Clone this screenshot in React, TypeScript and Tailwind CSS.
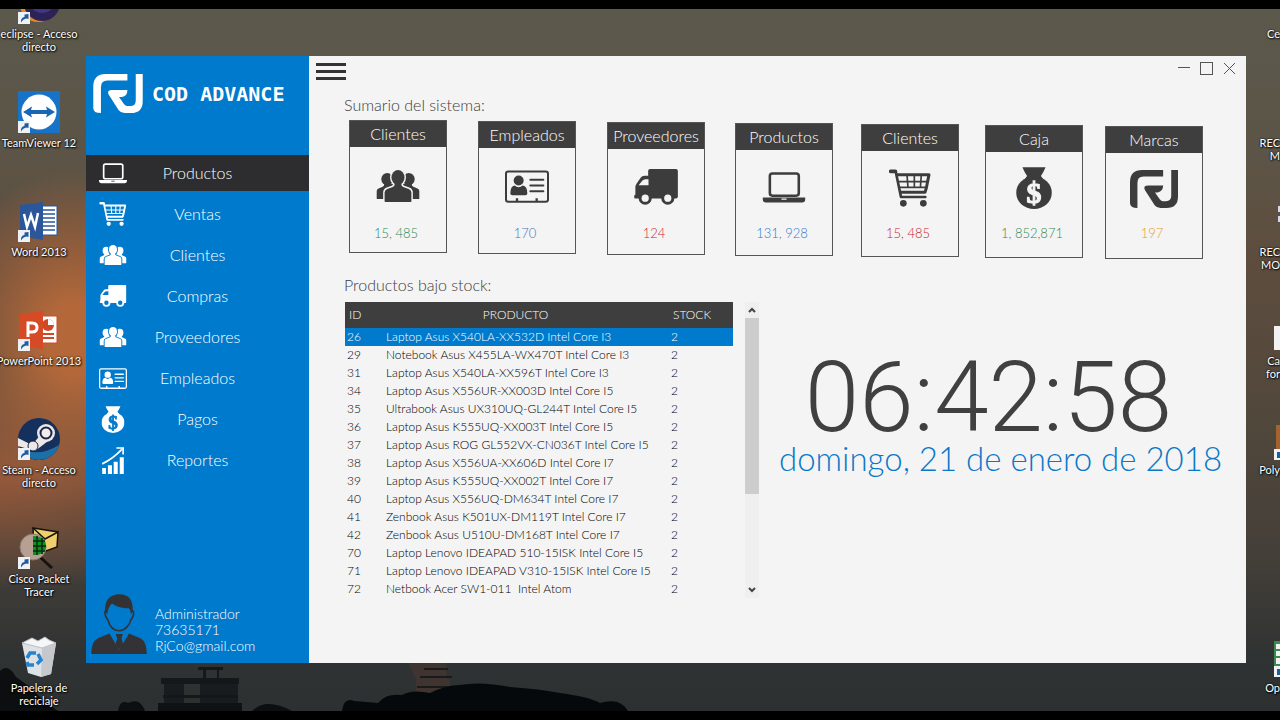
import { useId, type ReactNode } from 'react';

type IconProps = { className?: string };

function LogoIcon({ className }: IconProps) {
  return (
    <svg viewBox="0 0 142 112" className={className} fill="currentColor" aria-hidden="true">
      <path d="M0 98V36Q0 0 36 0H98V19H40Q22 19 22 38V112Q0 112 0 98Z" />
      <path d="M98 46H54Q38 46 44 59L73 104Q79 112 90 112H108Q142 112 142 78V0H122V76Q122 92 106 92H98Q92 92 88 86L74 66H82Q98 64 98 46Z" />
    </svg>
  );
}

function LaptopIcon({ className }: IconProps) {
  return (
    <svg viewBox="0 0 132 112" className={className} fill="currentColor" aria-hidden="true">
      <rect x="22" y="14" width="90" height="69" rx="8" fill="none" stroke="currentColor" strokeWidth="8" />
      <path fillRule="evenodd" d="M0 89H132V94Q132 104 122 104H10Q0 104 0 94ZM58 92V96H74V92Z" />
    </svg>
  );
}

function CartIcon({ className }: IconProps) {
  return (
    <svg viewBox="0 0 126 112" className={className} fill="none" stroke="currentColor" aria-hidden="true">
      <path d="M5 6H19" strokeWidth="11" strokeLinecap="round" />
      <path d="M20 6L36 83H109" strokeWidth="8" strokeLinecap="round" strokeLinejoin="round" />
      <path d="M24 16H120L112 56L108 69H34" strokeWidth="9" strokeLinejoin="round" />
      <path d="M28 37H116M32 54H112M54 16L57 56M76 16V56M97 16L94 56" strokeWidth="5" />
      <circle cx="43" cy="102" r="10" fill="currentColor" stroke="none" />
      <circle cx="103" cy="102" r="10" fill="currentColor" stroke="none" />
    </svg>
  );
}

function UsersIcon({ className }: IconProps) {
  const id = useId();
  const body = 'M25 96V69Q25 61 33 58L50 52Q56 50 56 42H76Q76 50 82 52L99 58Q107 61 107 69V96Q107 98 105 98H27Q25 98 25 96Z';
  return (
    <svg viewBox="0 0 132 98" className={className} fill="currentColor" aria-hidden="true">
      <mask id={id}>
        <rect width="132" height="98" fill="white" />
        <ellipse cx="66" cy="22" rx="20" ry="23" stroke="black" strokeWidth="9" fill="black" />
        <path d={body} stroke="black" strokeWidth="9" fill="black" />
      </mask>
      <g mask={`url(#${id})`}>
        <ellipse cx="33" cy="28" rx="18" ry="19" />
        <ellipse cx="99" cy="28" rx="18" ry="19" />
        <path d="M0 87V66Q0 59 8 56L19 51Q24 49 24 42H50V89H2Q0 89 0 87Z" />
        <path d="M132 87V66Q132 59 124 56L113 51Q108 49 108 42H82V89H130Q132 89 132 87Z" />
      </g>
      <ellipse cx="66" cy="23" rx="20" ry="23" />
      <path d={body} />
    </svg>
  );
}

function TruckIcon({ className }: IconProps) {
  const id = useId();
  return (
    <svg viewBox="0 0 134 110" className={className} fill="currentColor" aria-hidden="true">
      <mask id={id}>
        <rect width="134" height="110" fill="white" />
        <circle cx="34" cy="89" r="11" fill="black" />
        <circle cx="103" cy="89" r="11" fill="black" />
        <path d="M14 50L25 36Q29 31 35 31H44V50Z" fill="black" />
      </mask>
      <g mask={`url(#${id})`}>
        <path d="M43 6Q43 0 49 0H128Q134 0 134 6V84Q134 90 128 90H2Q0 90 0 82L4 78V54Q4 49 8 44L20 27Q24 21 32 21H43Z" />
        <circle cx="34" cy="89" r="20" />
        <circle cx="103" cy="89" r="20" />
      </g>
    </svg>
  );
}

function IdCardIcon({ className }: IconProps) {
  return (
    <svg viewBox="0 0 132 98" className={className} fill="currentColor" aria-hidden="true">
      <rect x="3" y="4" width="126" height="91" rx="7" fill="none" stroke="currentColor" strokeWidth="6" />
      <circle cx="41" cy="31" r="15" />
      <path d="M16 70Q16 48 29 46Q41 56 53 46Q67 48 67 70Q67 75 61 75H22Q16 75 16 70Z" />
      <path d="M76 29H115M76 46H115M76 63H115" stroke="currentColor" strokeWidth="6" strokeLinecap="round" />
      <path d="M36 84V94M95 84V94" stroke="currentColor" strokeWidth="7" />
    </svg>
  );
}

function MoneyBagIcon({ className }: IconProps) {
  const id = useId();
  return (
    <svg viewBox="0 0 108 127" className={className} fill="currentColor" aria-hidden="true">
      <mask id={id}>
        <rect width="108" height="127" fill="white" />
        <text x="54" y="108" textAnchor="middle" fontSize="90" fontWeight="700" fontFamily="Liberation Serif, serif" fill="black" stroke="black" strokeWidth="4">
          $
        </text>
      </mask>
      <path d="M19 1H89Q84 14 75 27L83 38H25L33 27Q24 14 19 1Z" />
      <ellipse cx="54" cy="78" rx="54" ry="49" mask={`url(#${id})`} />
    </svg>
  );
}

function ChartIcon({ className }: IconProps) {
  return (
    <svg viewBox="0 0 66 80" className={className} fill="currentColor" aria-hidden="true">
      <path d="M1 62H12V80H1ZM18 54H30V80H18ZM35 44H47V80H35ZM53 30H65V80H53Z" />
      <path d="M1 50Q34 34 59 7M43 3H63V22" fill="none" stroke="currentColor" strokeWidth="5" />
    </svg>
  );
}

function AvatarIcon({ className }: IconProps) {
  return (
    <svg viewBox="0 0 165 178" className={className} fill="#333335" aria-hidden="true">
      <path d="M41 53C39 18 56 1 84 1C112 1 126 20 123 53L118 60C116 46 114 42 109 42C88 42 72 36 62 28C53 36 50 44 48 60Z" />
      <path d="M46 50C44 48 39 50 41 58C42 68 46 72 49 76C54 94 66 109 83 109C100 109 113 94 118 76C121 72 125 68 126 58C126 50 122 48 120 51" fill="none" stroke="#333335" strokeWidth="5" />
      <path d="M54 117L20 131Q0 141 0 178H165Q165 141 146 131L112 117L83 166Z" />
      <path d="M73 119H94L90 132L96 152L83 164L71 152L77 132Z" />
    </svg>
  );
}

function ShortcutBadge() {
  return (
    <svg viewBox="0 0 12 12" className="absolute bottom-0 left-0 size-3" aria-hidden="true">
      <rect width="12" height="12" fill="#eef2f6" />
      <path d="M3 10.500Q2.500 5.500 6.500 5V2.500L10.500 2V7L8.500 6.500Q5 7 3 10.500Z" fill="#1f5b9d" />
    </svg>
  );
}

const desktopIcons: { lines: string[]; shortcut: boolean; art: ReactNode }[] = [
  {
    lines: ['eclipse - Acceso', 'directo'],
    shortcut: true,
    art: (
      <>
        <circle cx="20" cy="22" r="18" fill="#e58a2b" />
        <circle cx="24" cy="21" r="18" fill="#2c2255" />
        <circle cx="24" cy="18" r="13" fill="#41358a" />
      </>
    ),
  },
  {
    lines: ['TeamViewer 12'],
    shortcut: true,
    art: (
      <>
        <rect width="42" height="42" fill="#1673c8" />
        <circle cx="21" cy="21" r="17.500" fill="#fff" />
        <path d="M5 21L14 15.500L13 19H29L28 15.500L37 21L28 26.500L29 23H13L14 26.500Z" fill="#1b66b4" />
      </>
    ),
  },
  {
    lines: ['Word 2013'],
    shortcut: true,
    art: (
      <>
        <rect x="22" y="6" width="17" height="29" fill="#fff" stroke="#2b579a" />
        <path d="M24 10H37M24 14H37M24 18H37M24 22H37M24 26H37M24 30H37" stroke="#2b579a" strokeWidth="1.500" />
        <path d="M2 5L25 2V40L2 36Z" fill="#2b579a" />
        <path d="M6 14L9 27L13 15L17 27L20 13" fill="none" stroke="#fff" strokeWidth="2.500" />
      </>
    ),
  },
  {
    lines: ['PowerPoint 2013'],
    shortcut: true,
    art: (
      <>
        <rect x="22" y="7" width="17" height="27" fill="#fff" stroke="#d24726" />
        <circle cx="30" cy="16" r="6" fill="#d24726" />
        <path d="M30 16V10A6 6 0 0 1 36 16Z" fill="#fff" />
        <path d="M25 25H36M25 29H36" stroke="#d24726" strokeWidth="2" />
        <path d="M2 5L25 2V40L2 36Z" fill="#d64a26" />
        <path d="M10 28V14H14Q19 14 19 18.500Q19 23 14 23H11" fill="none" stroke="#fff" strokeWidth="3" />
      </>
    ),
  },
  {
    lines: ['Steam - Acceso', 'directo'],
    shortcut: true,
    art: (
      <>
        <circle cx="21" cy="21" r="21" fill="#15305c" />
        <path d="M2 30A21 21 0 0 0 41 27Q20 40 2 30Z" fill="#1c70a8" />
        <path d="M0 20L14 27L24 15L34 20L17 33L0 28Z" fill="#ece8e8" />
        <circle cx="28" cy="15" r="9" fill="#ece8e8" />
        <circle cx="28" cy="15" r="5.500" fill="#f2eeee" stroke="#1b2440" strokeWidth="2" />
        <circle cx="15" cy="28" r="5" fill="#ece8e8" stroke="#1b2440" />
      </>
    ),
  },
  {
    lines: ['Cisco Packet', 'Tracer'],
    shortcut: true,
    art: (
      <>
        <path d="M15 1L40 5L39 20L28 24L16 20Z" fill="#f0cf6c" stroke="#17140f" strokeWidth="1.500" />
        <path d="M15 1L27 12L40 5" fill="none" stroke="#17140f" strokeWidth="1.500" />
        <path d="M22 30L34 41" stroke="#17140f" strokeWidth="3" />
        <circle cx="15" cy="20" r="13" fill="#b7a093" stroke="#8b7a70" />
        <path d="M15 9Q27 9 28 20Q26 29 15 28Z" fill="#0c8f24" />
        <path d="M15 14H27M15 19H28M15 24H27M19 9V28M24 11V27" stroke="#072c0d" strokeWidth="1.500" />
      </>
    ),
  },
  {
    lines: ['Papelera de', 'reciclaje'],
    shortcut: false,
    art: (
      <>
        <path d="M4 7L38 7L33 38L23 41L10 37Z" fill="#dfe2e5" />
        <path d="M4 7L14 2L20 5L27 1L31 4L38 7L24 12Z" fill="#f5f6f7" stroke="#b9bec4" />
        <path d="M24 12L38 7L33 38L23 41Z" fill="#c5c9ce" />
        <path d="M9 22L12 17H18M20 18L23 24L19 28M16 29H10L9 26" fill="none" stroke="#2583cf" strokeWidth="3.500" />
      </>
    ),
  },
];

const edgeIcons: { lines: string[]; art: ReactNode }[] = [
  { lines: ['Ce'], art: null },
  { lines: ['REC', 'M'], art: null },
  { lines: ['REC', 'MO'], art: <path d="M4 6h2v6h-2zM4 16h2v6h-2z" fill="#d5d8e8" /> },
  { lines: ['Ca', 'for'], art: <path d="M0 17h6v24H0z" fill="#f2f2f2" /> },
  {
    lines: ['Poly'],
    art: (
      <>
        <path d="M2 7h4v24H2z" fill="#a5622f" />
        <path d="M0 31h6v11H0z" fill="#eef2f6" />
        <path d="M3 34h3v6H3z" fill="#1f5b9d" />
      </>
    ),
  },
  { lines: [], art: null },
  {
    lines: ['Op'],
    art: (
      <>
        <path d="M0 5h6v25H0z" fill="#3e8a4b" />
        <path d="M2 8h4v5H2zM2 15h4v5H2zM2 22h4v6H2z" fill="#f2f2f2" />
        <path d="M0 30h6v11H0z" fill="#eef2f6" />
        <path d="M3 33h3v6H3z" fill="#1f5b9d" />
      </>
    ),
  },
];

const menu = [
  { label: 'Productos', icon: <LaptopIcon className="h-6 w-7" /> },
  { label: 'Ventas', icon: <CartIcon className="h-6 w-7" /> },
  { label: 'Clientes', icon: <UsersIcon className="h-5 w-7" /> },
  { label: 'Compras', icon: <TruckIcon className="h-[22px] w-7" /> },
  { label: 'Proveedores', icon: <UsersIcon className="h-5 w-7" /> },
  { label: 'Empleados', icon: <IdCardIcon className="h-[21px] w-7" /> },
  { label: 'Pagos', icon: <MoneyBagIcon className="h-[27px] w-6" /> },
  { label: 'Reportes', icon: <ChartIcon className="h-[27px] w-6" /> },
];

const cards = [
  { label: 'Clientes', value: '15, 485', tone: 'text-[#2f8a52]', icon: <UsersIcon className="h-8 w-11" /> },
  { label: 'Empleados', value: '170', tone: 'text-[#4a70bd]', icon: <IdCardIcon className="h-[33px] w-11" /> },
  { label: 'Proveedores', value: '124', tone: 'text-[#cc2431]', icon: <TruckIcon className="h-9 w-11" /> },
  { label: 'Productos', value: '131, 928', tone: 'text-[#2c7dd0]', icon: <LaptopIcon className="h-9 w-11" /> },
  { label: 'Clientes', value: '15, 485', tone: 'text-[#cc2431]', icon: <CartIcon className="h-[38px] w-[42px]" /> },
  { label: 'Caja', value: '1, 852,871', tone: 'text-[#2f8a52]', icon: <MoneyBagIcon className="h-[42px] w-9" /> },
  { label: 'Marcas', value: '197', tone: 'text-[#dfa02a]', icon: <LogoIcon className="h-[38px] w-12" /> },
];

const products: [number, string, number][] = [
  [26, 'Laptop Asus X540LA-XX532D Intel Core I3', 2],
  [29, 'Notebook Asus X455LA-WX470T Intel Core I3', 2],
  [31, 'Laptop Asus X540LA-XX596T Intel Core I3', 2],
  [34, 'Laptop Asus X556UR-XX003D Intel Core I5', 2],
  [35, 'Ultrabook Asus UX310UQ-GL244T Intel Core I5', 2],
  [36, 'Laptop Asus K555UQ-XX003T Intel Core I5', 2],
  [37, 'Laptop Asus ROG GL552VX-CN036T Intel Core I5', 2],
  [38, 'Laptop Asus X556UA-XX606D Intel Core I7', 2],
  [39, 'Laptop Asus K555UQ-XX002T Intel Core I7', 2],
  [40, 'Laptop Asus X556UQ-DM634T Intel Core I7', 2],
  [41, 'Zenbook Asus K501UX-DM119T Intel Core I7', 2],
  [42, 'Zenbook Asus U510U-DM168T Intel Core I7', 2],
  [70, 'Laptop Lenovo IDEAPAD 510-15ISK Intel Core I5', 2],
  [71, 'Laptop Lenovo IDEAPAD V310-15ISK Intel Core I5', 2],
  [72, 'Netbook Acer SW1-011  Intel Atom', 2],
];

function Skyline() {
  return (
    <svg viewBox="0 0 1280 60" preserveAspectRatio="none" className="absolute inset-x-0 bottom-0 h-[60px] w-full" aria-hidden="true">
      <path d="M0 20Q8 12 16 26L30 36L44 50L58 60H0Z" fill="#0b0f10" />
      <path d="M118 60Q120 48 128 52Q140 46 145 60Z" fill="#0b0f10" />
      <path d="M161 27H239V33H161ZM163 44H238V47H163ZM198 16H223V19H198ZM203 18H206V28H203ZM217 18H219V28H217Z" fill="#14181a" />
      <path d="M164 32H184V54H164ZM200 28H238V56H200Z" fill="#14181a" opacity=".8" />
      <path d="M158 52H242V60H158Z" fill="#0e1213" />
      <path d="M252 60Q266 46 292 60Z" fill="#0b0f10" />
      <path d="M407 10H425L430 18L432 26L428 28V46H418L417 30Z" fill="#3f342f" />
      <path d="M416 28H450V42H416ZM424 12H446V28H422Z" fill="#3f342f" />
      <path d="M420 26H452M424 18H448M417 36H454" stroke="#1a1a1a" strokeWidth="2" />
      <path d="M342 60Q344 46 354 50L378 52Q386 42 402 44Q412 38 430 42Q446 34 460 34Q480 30 510 36Q540 38 560 42Q590 46 600 52Q620 46 628 60Z" fill="#06090b" />
    </svg>
  );
}

const labelText =
  'text-[11px] leading-[13px] whitespace-nowrap text-white [text-shadow:1px_1px_2px_#000,0_0_2px_#000]';

export default function App() {
  return (
    <div className="flex min-h-screen flex-col bg-black py-[9px] font-light">
      <div className="relative flex flex-1 items-start overflow-hidden bg-[radial-gradient(ellipse_140px_170px_at_75px_330px,#b4683a_20%,transparent),radial-gradient(ellipse_260px_110px_at_0px_470px,#94583a,transparent),linear-gradient(#5b594c_0%,#5c5446_22%,#5e4d3e_35%,#50473b_60%,#443f39_78%,#303333_92%,#2c3031_100%)] font-[Lato,sans-serif]">
        <Skyline />

        <aside className="relative -mt-[27px] -mb-12 flex w-[86px] shrink-0 flex-col" aria-label="Escritorio">
          {desktopIcons.map((item) => (
            <a key={item.lines.join(' ')} href="#" className="flex h-[109px] w-[78px] flex-col items-center gap-[3px]">
              <span className="relative block size-[42px] shrink-0">
                <svg viewBox="0 0 42 42" className="size-full" aria-hidden="true">
                  {item.art}
                </svg>
                {item.shortcut && <ShortcutBadge />}
              </span>
              <span className={`${labelText} text-center font-normal`}>
                {item.lines.map((line) => (
                  <span key={line} className="block">
                    {line}
                  </span>
                ))}
              </span>
            </a>
          ))}
        </aside>

        <div className="relative mt-[47px] flex min-w-0 flex-1 items-stretch bg-[#f4f4f4]">
          <nav className="flex w-[223px] shrink-0 flex-col bg-[#007acc] text-white">
            <div className="flex h-[99px] items-start gap-[9px] pt-[18px] pl-[7px]">
              <LogoIcon className="h-[39px] w-[50px]" />
              <span className="font-['DejaVu_Sans_Mono',monospace] text-[20px] leading-[40px] font-bold whitespace-nowrap">COD ADVANCE</span>
            </div>
            <ul className="flex flex-col gap-[5px]">
              {menu.map((item, i) => (
                <li key={item.label}>
                  <button
                    type="button"
                    className={
                      i === 0
                        ? 'grid h-9 w-full grid-cols-[54px_1fr_54px] items-center bg-[#2d2d30] text-[16px]'
                        : 'grid h-9 w-full grid-cols-[54px_1fr_54px] items-center text-[16px]'
                    }
                  >
                    <span className="flex justify-center">{item.icon}</span>
                    <span className="text-center">{item.label}</span>
                  </button>
                </li>
              ))}
            </ul>
            <div className="mt-auto flex items-end gap-2 pt-6 pb-[9px] pl-[5px] text-[14px] leading-[16px]">
              <AvatarIcon className="h-[60px] w-[56px]" />
              <div>
                <p>Administrador</p>
                <p>73635171</p>
                <p>RjCo@gmail.com</p>
              </div>
            </div>
          </nav>

          <main className="flex min-w-0 flex-1 flex-col pb-[65px] text-[#3c3c3c]">
            <div className="flex h-[39px] items-start justify-between pt-[6px] pr-[9px] pl-[7px]">
              <button type="button" aria-label="Menú" className="flex flex-col gap-1 pt-px">
                <span className="h-[3px] w-[30px] bg-[#333]" />
                <span className="h-[3px] w-[30px] bg-[#333]" />
                <span className="h-[3px] w-[30px] bg-[#333]" />
              </button>
              <div className="flex gap-[9px] text-[#555]">
                <button type="button" aria-label="Minimizar">
                  <svg viewBox="0 0 14 14" className="size-[14px]" fill="none" stroke="currentColor"><path d="M1 5.500H13" /></svg>
                </button>
                <button type="button" aria-label="Maximizar">
                  <svg viewBox="0 0 14 14" className="size-[14px]" fill="none" stroke="currentColor"><rect x=".5" y=".5" width="12" height="12" /></svg>
                </button>
                <button type="button" aria-label="Cerrar">
                  <svg viewBox="0 0 14 14" className="size-[14px]" fill="none" stroke="currentColor"><path d="M1 1L12 12M12 1L1 12" /></svg>
                </button>
              </div>
            </div>

            <h2 className="px-[35px] text-[16px] leading-5">Sumario del sistema:</h2>
            <div className="mt-[5px] mr-[43px] ml-10 grid h-[140px] grid-cols-[129fr_129fr_128fr_126fr_124fr_120fr_98fr] items-start">
              {cards.map((card, i) => (
                <section key={card.value + card.label} style={{ marginTop: i }} className="h-[133px] w-[98px] border border-[#555] text-center">
                  <h3 className="bg-[#3e3e3e] text-[16px] leading-[26px] whitespace-nowrap text-white">{card.label}</h3>
                  <div style={{ height: 77 - i }} className="flex items-center justify-center">
                    {card.icon}
                  </div>
                  <p className={`pr-1 text-[13px] leading-[18px] ${card.tone}`}>{card.value}</p>
                </section>
              ))}
            </div>

            <h2 className="mt-[15px] px-[35px] text-[16px] leading-5">Productos bajo stock:</h2>
            <div className="mt-[7px] flex gap-3 pl-9">
              <div className="w-[388px] shrink-0">
                <table className="w-full table-fixed border-collapse text-left text-[12px] leading-[18px]">
                  <thead className="bg-[#3e3e3e] text-white">
                    <tr className="h-[26px]">
                      <th className="w-[41px] pl-1 font-light">ID</th>
                      <th className="w-[285px] pr-[26px] text-center font-light">PRODUCTO</th>
                      <th className="pl-[2px] font-light">STOCK</th>
                    </tr>
                  </thead>
                  <tbody>
                    {products.map(([id, name, stock], i) => (
                      <tr key={id} className={i === 0 ? 'h-[18px] bg-[#007acc] text-white' : 'h-[18px] text-black'}>
                        <td className="pl-[2px]">{id}</td>
                        <td className="whitespace-pre">{name}</td>
                        <td>{stock}</td>
                      </tr>
                    ))}
                  </tbody>
                </table>
              </div>
              <div className="flex w-[14px] shrink-0 flex-col bg-[#efefef] text-[#444]">
                <button type="button" aria-label="Subir" className="flex h-4 items-center justify-center">
                  <svg viewBox="0 0 8 6" className="h-[6px] w-2" fill="none" stroke="currentColor" strokeWidth="2"><path d="M1 5L4 2L7 5" /></svg>
                </button>
                <div className="flex flex-1 flex-col">
                  <div className="h-2/3 bg-[#cdcdcd]" />
                </div>
                <button type="button" aria-label="Bajar" className="flex h-4 items-center justify-center">
                  <svg viewBox="0 0 8 6" className="h-[6px] w-2" fill="none" stroke="currentColor" strokeWidth="2"><path d="M1 1L4 4L7 1" /></svg>
                </button>
              </div>
              <div className="flex flex-1 flex-col items-center pt-[50px] pr-4 whitespace-nowrap">
                <time className="pr-6 font-[Roboto,sans-serif] text-[98px] leading-[92px] text-[#404040]">06:42:58</time>
                <p className="text-[33px] leading-7 text-[#0a78c8]">domingo, 21 de enero de 2018</p>
              </div>
            </div>
          </main>
        </div>

        <aside className="relative -mt-[27px] -mb-12 flex w-[34px] shrink-0 flex-col" aria-label="Accesos">
          {edgeIcons.map((item, i) => (
            <div key={i} className="flex h-[109px] flex-col items-end gap-[3px]">
              <svg viewBox="0 0 6 42" className="h-[42px] w-[6px] shrink-0" aria-hidden="true">
                {item.art}
              </svg>
              <span className={`${labelText} text-right font-normal`}>
                {item.lines.map((line) => (
                  <span key={line} className="block">
                    {line}
                  </span>
                ))}
              </span>
            </div>
          ))}
        </aside>
      </div>
    </div>
  );
}
